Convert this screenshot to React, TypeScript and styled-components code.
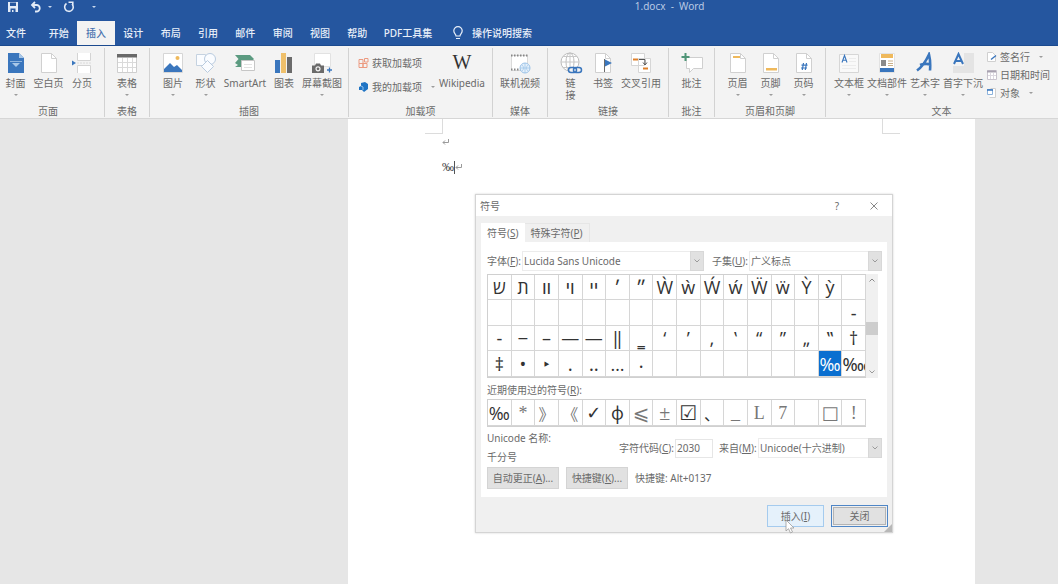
import React from 'react';
import styled, { createGlobalStyle, css } from 'styled-components';

const GlobalStyle = createGlobalStyle`
  *, *::before, *::after { box-sizing: border-box; }
  html, body, #root { height: 100%; }
  body { margin: 0; overflow: hidden; }
  body, button, select, input {
    font-family: 'Noto Sans', 'Noto Sans CJK SC', sans-serif;
    font-size: 10px;
    line-height: 12px;
    color: #6a6a6a;
  }
  button { border: 0; padding: 0; background: none; }
  svg { display: block; flex: none; }
`;

const Screen = styled.div`
  position: relative;
  display: flex;
  flex-direction: column;
  min-height: 100%;
  background: #e6e6e6;
`;

/* ---------- title bar and tabs ---------- */

const Header = styled.header`
  background: #25569f;
  border-bottom: 1px solid #1b4a8f;
`;

const TitleBar = styled.div`
  display: grid;
  grid-template-columns: 60% 1fr;
  height: 21px;
  color: #b9cae4;
`;

const QuickAccess = styled.div`
  display: flex;
  align-items: flex-start;
  padding: 1px 0 0 7px;
  gap: 11px;
`;

const QuickButton = styled.button`
  display: flex;
  align-items: center;
  gap: 6px;
  height: 12px;
  color: #e3ebf7;
`;

const Tabs = styled.nav`
  display: flex;
  height: 24px;
`;

const TabSet = styled.div`
  display: grid;
  grid-template-columns: repeat(9, 1fr);
  width: 336px;
  margin-left: 8px;
`;

const Tab = styled.button<{ $active?: boolean; $width?: number }>`
  width: ${p => (p.$width ? `${p.$width}px` : 'auto')};
  font-weight: 500;
  white-space: nowrap;
  color: ${p => (p.$active ? '#4a73b0' : '#e8eff9')};
  background: ${p => (p.$active ? '#f3f3f3' : 'transparent')};
`;

const TellMe = styled.button`
  display: flex;
  align-items: center;
  gap: 8px;
  margin-left: 12px;
  font-weight: 500;
  color: #e8eff9;
`;

/* ---------- ribbon ---------- */

const Ribbon = styled.div`
  display: flex;
  height: 73px;
  padding-top: 2px;
  background: #f3f3f3;
  border-bottom: 1px solid #d6d6d6;
`;

const Group = styled.section<{ $width?: number }>`
  display: flex;
  flex-direction: column;
  justify-content: space-between;
  flex: ${p => (p.$width ? `0 0 ${p.$width}px` : '1 0 232px')};
  border-right: 1px solid ${p => (p.$width ? '#d2d2d2' : 'transparent')};
  margin-bottom: 1px;
`;

const GroupBody = styled.div<{ $start?: number }>`
  display: flex;
  justify-content: ${p => (p.$start === undefined ? 'center' : 'flex-start')};
  padding-left: ${p => p.$start ?? 0}px;
`;

const GroupName = styled.div<{ $inset?: number }>`
  padding-right: ${p => p.$inset ?? 0}px;
  text-align: center;
`;

const Tool = styled.button<{ $width: number }>`
  display: flex;
  flex-direction: column;
  align-items: center;
  width: ${p => p.$width}px;
  padding-top: 4px;
  white-space: nowrap;
`;

const ToolName = styled.span<{ $narrow?: boolean }>`
  margin-top: 3px;
  ${p => p.$narrow && css`
    width: 10px;
    white-space: normal;
  `}
`;

const SmallTools = styled.div<{ $gap: number; $top: number; $start?: number }>`
  display: flex;
  flex-direction: column;
  align-items: flex-start;
  gap: ${p => p.$gap}px;
  padding: ${p => p.$top}px 0 0 ${p => p.$start ?? 0}px;
`;

const SmallTool = styled.button`
  display: flex;
  align-items: center;
  gap: 3px;
  height: 12px;
  white-space: nowrap;
`;

const CaretShape = styled.i<{ $light?: boolean; $apart?: boolean }>`
  width: 0;
  border: 2px solid transparent;
  border-top-color: ${p => (p.$light ? '#c9d8ee' : '#9c9c9c')};
  border-bottom: 0;
  margin: ${p => (p.$apart ? '0 0 0 6px' : '0')};
`;

const CaretRow = styled.span`
  display: flex;
  height: 12px;
  align-items: center;
`;

/* ---------- document ---------- */

const Workspace = styled.main`
  flex: 1;
  display: flex;
  padding: 0 83px 0 348px;
`;

const Paper = styled.article`
  flex: 1;
  background: #fff;
`;

const CropMarks = styled.div`
  display: flex;
  justify-content: space-between;
  padding: 0 75px 0 77px;
`;

const CropMark = styled.div<{ $side: 'left' | 'right' }>`
  width: 18px;
  height: 15px;
  border-bottom: 1px solid #dcdcdc;
  ${p => (p.$side === 'left' ? 'border-right' : 'border-left')}: 1px solid #dcdcdc;
`;

const Paragraph = styled.p`
  display: flex;
  align-items: center;
  height: 16px;
  margin: 0 0 9px;
  padding-left: 94px;
  font-family: 'Liberation Serif', serif;
  font-size: 12px;
  color: #444;
`;

const TextCursor = styled.i`
  width: 1px;
  height: 13px;
  background: #555;
`;

/* ---------- symbol dialog ---------- */

const Dialog = styled.div`
  position: absolute;
  left: 475px;
  top: 194px;
  width: 418px;
  background: #f0f0f0;
  border: 1px solid #d4d4d4;
  box-shadow: 0 0 2px rgba(0, 0, 0, 0.18);
`;

const DialogTitle = styled.div`
  display: flex;
  align-items: center;
  height: 21px;
  padding: 0 13px 0 4px;
  background: #fff;
`;

const DialogName = styled.h2`
  flex: 1;
  margin: 0;
  font-size: 10px;
  font-weight: 400;
`;

const WindowButton = styled.button`
  display: grid;
  place-items: center;
  width: 10px;
  margin-left: 27px;
`;

const DialogTabs = styled.div`
  display: flex;
  padding: 7px 0 0 5px;
`;

const DialogTab = styled.button<{ $active?: boolean }>`
  height: 19px;
  padding: 0 6px;
  background: ${p => (p.$active ? '#fff' : '#f0f0f0')};
  border: solid ${p => (p.$active ? '#fff' : '#e6e6e6')};
  border-width: ${p => (p.$active ? '0' : '1px 1px 0 0')};
`;

const Panel = styled.div`
  margin: 0 5px;
  padding: 9px 5px 8px 6px;
  background: #fff;
`;

const Row = styled.div<{ $gap?: number }>`
  display: flex;
  align-items: center;
  gap: ${p => p.$gap ?? 0}px;
`;

const Label = styled.label<{ $width: number }>`
  flex: 0 0 ${p => p.$width}px;
  white-space: nowrap;
`;

const SelectBox = styled.span<{ $width?: number; $after?: number }>`
  display: grid;
  grid-template-columns: 1fr 14px;
  flex: ${p => (p.$width ? `0 0 ${p.$width}px` : '1')};
  height: 20px;
  margin-right: ${p => p.$after ?? 0}px;
`;

const Select = styled.select`
  grid-area: 1 / 1 / 2 / 3;
  appearance: none;
  padding: 0 16px 0 1px;
  background: #fff;
  border: 1px solid #ececec;
  border-radius: 0;
`;

const SelectArrow = styled.span`
  grid-area: 1 / 2 / 2 / 3;
  display: grid;
  place-items: center;
  background: #e1e1e1;
  border: 1px solid #d8d8d8;
  pointer-events: none;
`;

const CodeInput = styled.input`
  width: 38px;
  height: 19px;
  padding: 0 1px;
  border: 1px solid #e6e6e6;
  margin-right: 6px;
`;

const SymbolArea = styled.div`
  display: flex;
  margin: 3px 4px 0 0;
`;

const SymbolGrid = styled.div<{ $rows: string }>`
  flex: 1;
  display: grid;
  grid-template-columns: repeat(16, minmax(0, 1fr));
  grid-template-rows: ${p => p.$rows};
  border: solid #d0d0d0;
  border-width: 1px 0 1px 1px;
`;

const Cell = styled.button<{ $selected?: boolean; $font?: string; $size?: number; $faint?: boolean; $wide?: boolean }>`
  display: flex;
  align-items: center;
  justify-content: ${p => (p.$wide ? 'flex-start' : 'center')};
  overflow: hidden;
  white-space: nowrap;
  line-height: 24px;
  font-family: ${p => p.$font ?? "'Open Sans', 'Noto Sans', 'Liberation Sans', 'DejaVu Sans', sans-serif"};
  font-size: ${p => p.$size ?? 18}px;
  color: ${p => (p.$selected ? '#fff' : p.$faint ? '#777' : '#333')};
  background: ${p => (p.$selected ? '#0a6fd0' : '#fff')};
  border: solid #d6d6d6;
  border-width: 0 1px 1px 0;
`;

const Scrollbar = styled.div`
  display: flex;
  flex-direction: column;
  align-items: center;
  width: 12px;
  padding: 4px 0;
  background: #f0f0f0;
`;

const Thumb = styled.div`
  align-self: stretch;
  height: 13px;
  margin: 40px 0 auto;
  background: #cdcdcd;
`;

const RecentArea = styled.div`
  margin: 3px 16px 0 0;
`;

const Caption = styled.div`
  margin-top: 6px;
`;

const Details = styled.div`
  display: flex;
  align-items: center;
  margin-top: 2px;
`;

const NameBlock = styled.div`
  flex: 0 0 132px;
  line-height: 19px;
`;

const PushButton = styled.button<{ $kind?: 'hot' | 'default'; $width: number }>`
  width: ${p => p.$width}px;
  height: 22px;
  white-space: nowrap;
  background: #e1e1e1;
  border: 1px solid #d4d4d4;
  ${p => p.$kind === 'hot' && css`
    background: #e5f1fb;
    border-color: #a5cbee;
  `}
  ${p => p.$kind === 'default' && css`
    border: 1px solid #4f86c6;
    box-shadow: inset 0 0 0 1px #f0f0f0, inset 0 0 0 2px #b4b4b4;
  `}
`;

const Footer = styled.div`
  display: flex;
  justify-content: flex-end;
  gap: 7px;
  padding: 8px 4px 5px;
`;

const Grip = styled.div`
  position: absolute;
  right: 0;
  bottom: 0;
  border: 4px solid #b8b8b8;
  border-top-color: transparent;
  border-left-color: transparent;
`;

const Pointer = styled.svg`
  position: absolute;
  left: 309px;
  top: 324px;
`;

/* ---------- icons ---------- */

const Art = ({ children, w = 22 }: { children: React.ReactNode; w?: number }) => (
  <svg width={w} height="22" viewBox={`0 0 ${w} 22`} fill="none">{children}</svg>
);

const sheet = 'M3.5 1.5h10l5 5v14h-15z';
const fold = 'M13.5 1.5v5h5';
const Sheet = () => (
  <>
    <path d={sheet} fill="#fff" stroke="#d0d0d0" />
    <path d={fold} stroke="#d0d0d0" />
  </>
);

const icons: Record<string, React.ReactNode> = {
  cover: <Art><path d="M3 1h11l5 5v15H3z" fill="#3a76bd" /><path d="M14 1v5h5" fill="#a9c8e8" /><path d="M5 9.500h12" stroke="#8fb5de" /><path d="M7 11h8l-4 4z" fill="#a9c8e8" /></Art>,
  blank: <Art><Sheet /></Art>,
  pageBreak: <Art><path d="M6.500 1v7.500h13V1M6.500 21v-7.500h13V21" fill="#fff" stroke="#d4d4d4" /><path d="M6 11h14" stroke="#dadada" strokeDasharray="2 1" /><path d="M1 8.500l4 2.500-4 2.500z" fill="#3a76bd" /></Art>,
  table: <Art><path d="M1.500 2.500h19v18h-19z" fill="#fff" stroke="#cfcfcf" /><path d="M1 2h20v3.500H1z" fill="#696969" /><path d="M6.500 6v14M11.500 6v14M16.500 6v14M2 10.500h18M2 15.500h18" stroke="#dadada" /></Art>,
  picture: <Art><path d="M1.500 1.500h19v19h-19z" fill="#fff" stroke="#d6d6d6" /><path d="M2 20v-3l6-6 4 4 3-2 5 5v2z" fill="#3a76bd" /><circle cx="15.500" cy="6" r="2" fill="#efb95c" /></Art>,
  shapes: <Art><path d="M1.500 2.500h9v11h-9z" fill="#fafcff" stroke="#c5d2e0" /><circle cx="15" cy="7" r="5.500" fill="#fafcff" stroke="#b9cbdf" /><path d="M12.500 8.500l6 6-6 6-6-6z" fill="#fafcff" stroke="#b9cbdf" /></Art>,
  smartArt: <Art><path d="M1 3h15l4 4-4 4H1l3.500-4z" fill="#5b9a80" /><path d="M1 11h8v4H1l3-2z" fill="#5b9a80" /><path d="M7.500 8.500h13v10h-13z" fill="#fff" stroke="#c6c6c6" /><path d="M10 12.500h8M10 15.500h8" stroke="#e2e2e2" /></Art>,
  chart: <Art><path d="M2 8h5v13H2z" fill="#3a76bd" /><path d="M8 1h5v20H8z" fill="#efc06b" /><path d="M14 5h5v16h-5z" fill="#6b6b6b" /></Art>,
  screenshot: <Art><path d="M3.500 1.500h16v13h-16z" fill="#fff" stroke="#e2e2e2" /><path d="M1 13.500h3l1-2h4l1 2h3V21H1z" fill="#6b6b6b" /><circle cx="7" cy="16.800" r="2" stroke="#f3f3f3" strokeWidth="1.200" /><path d="M18.500 15.500v5M16 18h5" stroke="#3a76bd" strokeWidth="1.300" /></Art>,
  video: <Art><path d="M2.500 3.500h16v15h-16z" fill="#fff" stroke="#dadada" /><path d="M2 3.500h17M2 17.500h10" stroke="#888" strokeWidth="2" strokeDasharray="1.500 1.500" /><circle cx="16" cy="16" r="5" fill="#e4f0fb" stroke="#9cc3e8" /><path d="M11 16h10M16 11v10M13 13c2 1.500 2 4.500 0 6M19 13c-2 1.500-2 4.500 0 6" stroke="#9cc3e8" strokeWidth=".7" /></Art>,
  link: <Art w={24}><circle cx="11" cy="10" r="9" fill="#fff" stroke="#bdbdbd" /><ellipse cx="11" cy="10" rx="4" ry="9" stroke="#bdbdbd" /><path d="M2 10h18M11 1v18M4 4.500h14M4 15.500h14" stroke="#c8c8c8" /><rect x="9.500" y="15.500" width="8" height="5" rx="2.500" fill="#f3f3f3" stroke="#3a76bd" strokeWidth="1.500" /><rect x="14.500" y="15.500" width="8" height="5" rx="2.500" stroke="#3a76bd" strokeWidth="1.500" /></Art>,
  bookmark: <Art><Sheet /><path d="M12.500 7v13" stroke="#6b6b6b" /><path d="M13 7.500l7 3.500-7 3.500z" fill="#3a76bd" /></Art>,
  crossRef: <Art><path d="M1.500 1.500h13v12h-13zM8.500 6.500h12v14h-12z" fill="#fff" stroke="#d6d6d6" /><path d="M3 7.500h5M13 16.500h5" stroke="#e0812c" strokeWidth="2" /><path d="M9 7.500h6v5M13 10.500l2 2.500 2-2.500" stroke="#555" /></Art>,
  comment: <Art><path d="M5.500 5.500h16v11h-9l-4 4v-4h-3z" fill="#fff" stroke="#cfcfcf" /><path d="M4.500 1v8M.5 5h8" stroke="#4f9577" strokeWidth="2" /></Art>,
  header: <Art><Sheet /><path d="M6 4h7v2H6z" fill="#efb95c" /></Art>,
  footer: <Art><Sheet /><path d="M6 16h11v2.500H6z" fill="#efb95c" /></Art>,
  pageNo: <Art><Sheet /><path d="M10.500 11l-1.200 7M13.500 11l-1.200 7M8.500 13.200h6M8 16h6" stroke="#3a76bd" strokeWidth="1.200" /></Art>,
  textBox: <Art><path d="M1.500 2.500h19v18h-19z" fill="#f9f9f9" stroke="#d6d6d6" /><path d="M4 10.500l2.500-7 2.500 7M5 8.200h3" stroke="#3a76bd" strokeWidth="1.100" /><path d="M11 6.500h7M11 9.500h7M4 13.500h14M4 16.500h14" stroke="#ececec" /></Art>,
  parts: <Art><path d="M3.500 1.500h15v19h-15z" fill="#fff" stroke="#e2e2e2" /><path d="M5 2h12v4H5z" fill="#efb95c" /><path d="M5 8h5v6H5z" fill="#8a8a8a" /><path d="M12 9h5M12 11.500h5M12 13.500h5" stroke="#c9b08a" /><path d="M4 16h14v4H4z" fill="#3a76bd" /></Art>,
  wordArt: <Art><path d="M3 18.500C8 15 12 9 15 2.500c1 4 1.500 10 1 16M6 13c4-1.500 7-1.500 11-.500" stroke="#3a76bd" strokeWidth="2.600" /></Art>,
  dropCap: <Art><path d="M12 1h10v20H1v-7h11z" fill="#e4e4e4" /><path d="M2 12L6.500 2 11 12M3.500 9h6" stroke="#3a76bd" strokeWidth="2" /></Art>,
};

const SmallArt = ({ children }: { children: React.ReactNode }) => (
  <svg width="11" height="12" viewBox="0 0 11 12" fill="none">{children}</svg>
);

const ChevronDown = () => (
  <svg width="6" height="4" viewBox="0 0 6 4" fill="none" stroke="#9a9a9a"><path d="M.5.500L3 3 5.500.500" /></svg>
);
const ChevronUp = () => (
  <svg width="6" height="4" viewBox="0 0 6 4" fill="none" stroke="#888"><path d="M.5 3.500L3 1l2.500 2.500" /></svg>
);
const ReturnMark = () => (
  <svg width="8" height="8" viewBox="0 0 8 8" fill="none" stroke="#9a9a9a"><path d="M6.500 1v3.500H1M3 2.500l-2 2 2 2" /></svg>
);

/* ---------- data ---------- */

type ToolSpec = [icon: string, name: string, width: number, caret?: boolean];

const Tools = ({ items }: { items: ToolSpec[] }) => (
  <>
    {items.map(([icon, name, width, caret]) => (
      <Tool key={name} $width={width}>
        {icons[icon]}
        <ToolName $narrow={icon === 'link'}>{name}</ToolName>
        {caret && <CaretRow><CaretShape /></CaretRow>}
      </Tool>
    ))}
  </>
);

const symbols = [
  ...'שתװױײ׳״ẀẁẂẃẄẅỲỳ ',
  ...'               ‐',
  ...'‐‒–—―‖‗‘’‚‛“”„‟†',
  ...'‡•‣․‥…‧       ‰‱',
];

const serif = "'Liberation Serif', 'Noto Sans CJK SC', serif";
const cjk = "'Noto Sans CJK SC', sans-serif";
const dejavu = "'DejaVu Sans', sans-serif";

interface Recent { s: string; font?: string; size?: number; faint?: boolean }
const recent: Recent[] = [
  { s: '‰' },
  { s: '*', font: serif, faint: true },
  { s: '》', font: cjk, size: 16, faint: true },
  { s: '《', font: cjk, size: 16, faint: true },
  { s: '✓', font: dejavu },
  { s: 'ф' },
  { s: '⩽', font: dejavu, size: 20, faint: true },
  { s: '±', font: serif, size: 20, faint: true },
  { s: '☑', font: dejavu, size: 20 },
  { s: '、', font: cjk, size: 16 },
  { s: '_', font: serif, faint: true },
  { s: 'L', font: serif, faint: true },
  { s: '7', font: serif, faint: true },
  { s: ' ' },
  { s: '□', font: dejavu, size: 18, faint: true },
  { s: '!', font: serif, faint: true },
];

const tabs = ['开始', '插入', '设计', '布局', '引用', '邮件', '审阅', '视图', '帮助'];

export default function App() {
  return (
    <Screen>
      <GlobalStyle />
      <Header>
        <TitleBar>
          <QuickAccess>
            <QuickButton aria-label="保存">
              <svg width="12" height="12" viewBox="0 0 12 12"><path d="M1 1h10v10H1z" fill="#e3ebf7" /><path d="M3 1.500h6V5H3zM3.500 7.500h5V11h-5z" fill="#25569f" /><path d="M5 9h1.500v2H5z" fill="#e3ebf7" /></svg>
            </QuickButton>
            <QuickButton aria-label="撤消">
              <svg width="12" height="12" viewBox="0 0 12 12" fill="none" stroke="#e3ebf7" strokeWidth="1.800"><path d="M5 1L2 4l3 3M2 4h4.500a3 3 0 010 6.500H5" /></svg>
              <CaretShape $light />
            </QuickButton>
            <QuickButton aria-label="重复">
              <svg width="12" height="12" viewBox="0 0 12 12" fill="none" stroke="#e3ebf7" strokeWidth="1.600"><path d="M3.500 2.500a4.300 4.300 0 105.500.500M5.500 1.200h4.300V5" /></svg>
            </QuickButton>
            <QuickButton aria-label="自定义快速访问工具栏"><CaretShape $light $apart /></QuickButton>
          </QuickAccess>
          <span>1.docx&nbsp; -&nbsp; Word</span>
        </TitleBar>
        <Tabs>
          <Tab $width={32}>文件</Tab>
          <TabSet>
            {tabs.map(t => <Tab key={t} $active={t === '插入'}>{t}</Tab>)}
          </TabSet>
          <Tab $width={64}>PDF工具集</Tab>
          <TellMe>
            <svg width="12" height="14" viewBox="0 0 12 14" fill="none" stroke="#e8eff9" strokeWidth="1.200"><path d="M4 10C4 8 1.800 7.500 1.800 4.800a4.200 4.200 0 018.400 0C10.200 7.500 8 8 8 10zM4 12.500h4" /></svg>
            操作说明搜索
          </TellMe>
        </Tabs>
      </Header>

      <Ribbon>
        <Group $width={105}>
          <GroupBody $start={0}>
            <Tools items={[['cover', '封面', 31, true], ['blank', '空白页', 35], ['pageBreak', '分页', 32]]} />
          </GroupBody>
          <GroupName $inset={8}>页面</GroupName>
        </Group>
        <Group $width={45}>
          <GroupBody><Tools items={[['table', '表格', 32, true]]} /></GroupBody>
          <GroupName>表格</GroupName>
        </Group>
        <Group $width={199}>
          <GroupBody $start={7}>
            <Tools items={[['picture', '图片', 32, true], ['shapes', '形状', 33, true], ['smartArt', 'SmartArt', 46], ['chart', '图表', 32], ['screenshot', '屏幕截图', 44, true]]} />
          </GroupBody>
          <GroupName>插图</GroupName>
        </Group>
        <Group $width={144}>
          <GroupBody $start={9}>
            <SmallTools $gap={12} $top={9}>
              <SmallTool>
                <SmallArt><path d="M1 2.500h4v4H1zM1 6.500h4v4H1zM5 6.500h4v4H5zM6.500 1.500h3.500v3.500H6.500z" stroke="#ec9a80" /></SmallArt>
                获取加载项
              </SmallTool>
              <SmallTool>
                <SmallArt><path d="M3 2l4-1 3 2v5l-4 3-2-2H1V6l2-1z" fill="#1f74c4" /><path d="M3 5l2 1v3" stroke="#8fc0ee" /></SmallArt>
                我的加载项<CaretShape $apart />
              </SmallTool>
            </SmallTools>
            <Tool $width={54}>
              <svg width="24" height="22" viewBox="0 0 24 22">
                <text x="12" y="17" textAnchor="middle" fontFamily="'Liberation Serif', serif" fontSize="20" fill="#333">W</text>
              </svg>
              <ToolName>Wikipedia</ToolName>
            </Tool>
          </GroupBody>
          <GroupName>加载项</GroupName>
        </Group>
        <Group $width={55}>
          <GroupBody><Tools items={[['video', '联机视频', 44]]} /></GroupBody>
          <GroupName>媒体</GroupName>
        </Group>
        <Group $width={121}>
          <GroupBody $start={6}>
            <Tools items={[['link', '链接', 33], ['bookmark', '书签', 32], ['crossRef', '交叉引用', 44]]} />
          </GroupBody>
          <GroupName>链接</GroupName>
        </Group>
        <Group $width={46}>
          <GroupBody><Tools items={[['comment', '批注', 32]]} /></GroupBody>
          <GroupName>批注</GroupName>
        </Group>
        <Group $width={111}>
          <GroupBody $start={6}>
            <Tools items={[['header', '页眉', 33, true], ['footer', '页脚', 33, true], ['pageNo', '页码', 33, true]]} />
          </GroupBody>
          <GroupName>页眉和页脚</GroupName>
        </Group>
        <Group>
          <GroupBody $start={6}>
            <Tools items={[['textBox', '文本框', 34, true], ['parts', '文档部件', 42, true], ['wordArt', '艺术字', 34, true], ['dropCap', '首字下沉', 42, true]]} />
            <SmallTools $gap={6} $top={3} $start={2}>
              <SmallTool>
                <SmallArt><path d="M1.500 1.500h5l3 3v6h-8z" fill="#fff" stroke="#d0d0d0" /><path d="M5 8.500l5-4" stroke="#3a76bd" strokeWidth="1.500" /></SmallArt>
                签名行<CaretShape $apart />
              </SmallTool>
              <SmallTool>
                <SmallArt><path d="M1.500 1.500h9v9h-9z" fill="#fff" stroke="#c9c4ce" /><path d="M1 2.500h9" stroke="#a8a2b0" strokeWidth="2" /><path d="M4.500 4v6M7.500 4v6M2 6.500h8" stroke="#dcd8e0" /></SmallArt>
                日期和时间
              </SmallTool>
              <SmallTool>
                <SmallArt><path d="M4.500 1.500h5v9h-6" fill="#fff" stroke="#d0d0d0" /><path d="M1.500 2.500h5v5h-5z" fill="#fff" stroke="#8db3dc" /><path d="M1 3h6" stroke="#3a76bd" strokeWidth="1.500" /></SmallArt>
                对象<CaretShape $apart />
              </SmallTool>
            </SmallTools>
          </GroupBody>
          <GroupName>文本</GroupName>
        </Group>
      </Ribbon>

      <Workspace>
        <Paper>
          <CropMarks><CropMark $side="left" /><CropMark $side="right" /></CropMarks>
          <Paragraph><ReturnMark /></Paragraph>
          <Paragraph>‰<TextCursor /><ReturnMark /></Paragraph>
        </Paper>
      </Workspace>

      <Dialog role="dialog" aria-label="符号">
        <DialogTitle>
          <DialogName>符号</DialogName>
          <WindowButton>?</WindowButton>
          <WindowButton aria-label="关闭窗口">
            <svg width="8" height="8" viewBox="0 0 8 8" stroke="#888"><path d="M.5.500l7 7M7.500.500l-7 7" /></svg>
          </WindowButton>
        </DialogTitle>
        <DialogTabs>
          <DialogTab $active>符号(<u>S</u>)</DialogTab>
          <DialogTab>特殊字符(<u>P</u>)</DialogTab>
        </DialogTabs>
        <Panel>
          <Row>
            <Label htmlFor="font" $width={35}>字体(<u>F</u>):</Label>
            <SelectBox $width={182} $after={8}>
              <Select id="font"><option>Lucida Sans Unicode</option></Select>
              <SelectArrow><ChevronDown /></SelectArrow>
            </SelectBox>
            <Label htmlFor="subset" $width={37}>子集(<u>U</u>):</Label>
            <SelectBox>
              <Select id="subset"><option>广义标点</option></Select>
              <SelectArrow><ChevronDown /></SelectArrow>
            </SelectBox>
          </Row>
          <SymbolArea>
            <SymbolGrid $rows="25px 26px 25px 26px">
              {symbols.map((s, i) => <Cell key={i} $selected={s === '‰'} $wide={s === '‱'}>{s}</Cell>)}
            </SymbolGrid>
            <Scrollbar><ChevronUp /><Thumb /><ChevronDown /></Scrollbar>
          </SymbolArea>
          <Caption>近期使用过的符号(<u>R</u>):</Caption>
          <RecentArea>
            <SymbolGrid $rows="26px">
              {recent.map((r, i) => <Cell key={i} $font={r.font} $size={r.size} $faint={r.faint}>{r.s}</Cell>)}
            </SymbolGrid>
          </RecentArea>
          <Details>
            <NameBlock>Unicode 名称:<br />千分号</NameBlock>
            <Label htmlFor="code" $width={56}>字符代码(<u>C</u>):</Label>
            <CodeInput id="code" defaultValue="2030" />
            <Label htmlFor="from" $width={39}>来自(<u>M</u>):</Label>
            <SelectBox>
              <Select id="from"><option>Unicode(十六进制)</option></Select>
              <SelectArrow><ChevronDown /></SelectArrow>
            </SelectBox>
          </Details>
          <Row $gap={7}>
            <PushButton $width={72}>自动更正(<u>A</u>)...</PushButton>
            <PushButton $width={62}>快捷键(<u>K</u>)...</PushButton>
            <span>快捷键: Alt+0137</span>
          </Row>
        </Panel>
        <Footer>
          <PushButton $kind="hot" $width={57}>插入(<u>I</u>)</PushButton>
          <PushButton $kind="default" $width={57}>关闭</PushButton>
        </Footer>
        <Grip />
        <Pointer width="10" height="15" viewBox="0 0 10 15"><path d="M1 1v11l2.500-2.300 2 4.300 2-1-2-4H9z" fill="#fff" stroke="#9a9a9a" strokeWidth=".8" /></Pointer>
      </Dialog>
    </Screen>
  );
}
